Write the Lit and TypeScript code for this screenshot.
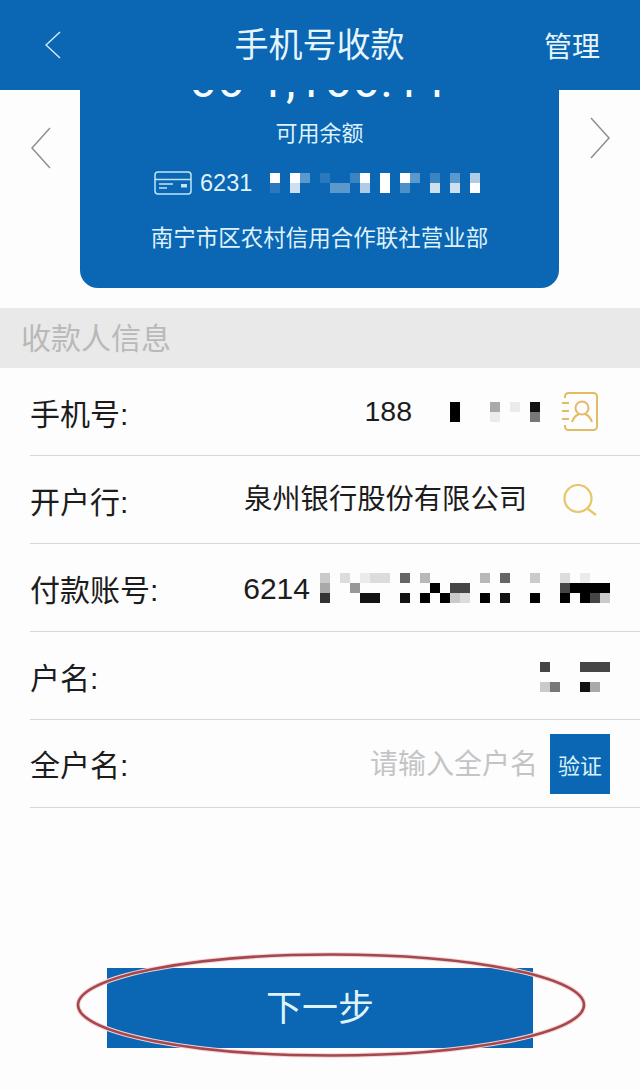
import { LitElement, html, css } from "lit";
import { customElement, property } from "lit/decorators.js";

@customElement("pixel-mosaic")
class PixelMosaic extends LitElement {
  @property({ type: Array }) rows: string[] = [];
  @property() tint = "0,0,0";
  static styles = css`
    :host { display: block; }
    .row { display: flex; }
    .cell { width: 10px; height: 10px; flex: none; }
  `;
  render() {
    return this.rows.map(
      (r) => html`<div class="row">${[...r].map((c) => {
        const a = c === "." ? 0 : parseInt(c, 16) / 15;
        return html`<div class="cell" style="background:rgba(${this.tint},${a.toFixed(2)})"></div>`;
      })}</div>`
    );
  }
}

const chevron = (pts: string, w: number, h: number, cls: string) => html`
  <svg class=${cls} width=${w} height=${h} viewBox="0 0 ${w} ${h}" fill="none">
    <polyline points=${pts} stroke="currentColor" stroke-width="1.5" />
  </svg>`;

@customElement("app-root")
class AppRoot extends LitElement {
  static styles = css`
    :host {
      display: block;
      width: 640px;
      height: 1090px;
      overflow: hidden;
      background: #fdfdfd;
      font-family: "Liberation Sans", "Noto Sans CJK SC", sans-serif;
      color: #1c1c1c;
    }
    .bar {
      height: 90px;
      background: #0b66b3;
      color: #e6f5fb;
      display: grid;
      grid-template-columns: 1fr auto 1fr;
      align-items: center;
      padding: 0 40px 0 45px;
    }
    .back { margin-top: -1px; color: #d5e8f3; }
    .title { font-size: 34px; line-height: 90px; margin-left: -6px; }
    .manage { font-size: 28px; justify-self: end; margin-top: -1px; }

    .carousel {
      display: grid;
      grid-template-columns: 80px 479px 81px;
      height: 198px;
    }
    .prev { margin: 37px 0 0 30px; color: #8f8f8f; display: block; }
    .next { margin: 27px 0 0 31px; color: #8f8f8f; display: block; }
    .card {
      background: #0b66b3;
      border-radius: 0 0 18px 18px;
      color: #dff2fa;
      display: flex;
      flex-direction: column;
      align-items: center;
    }
    .amount {
      height: 16px;
      overflow: hidden;
      color: #f6fbfd;
      font-family: Roboto, sans-serif;
      font-size: 48px;
      line-height: 48px;
      letter-spacing: 1px;
      white-space: pre;
    }
    .amount span { display: block; margin-top: -33px; }
    .avail { font-size: 22px; line-height: 30px; margin-top: 13px; }
    .acct {
      display: flex;
      align-items: center;
      margin-top: 19px;
      height: 30px;
      align-self: flex-start;
      padding-left: 74px;
    }
    .acct svg { color: #bfe6f7; display: block; }
    .acct .num { font-size: 23.5px; margin-left: 8px; width: 60px; }
    .org { font-size: 22.5px; line-height: 32px; margin-top: 25px; white-space: nowrap; }

    .section {
      margin-top: 20px;
      height: 60px;
      background: #e9e9e9;
      color: #b9b9b9;
      font-size: 30px;
      line-height: 62px;
      padding-left: 21px;
    }
    .row {
      height: 87px;
      margin-left: 30px;
      border-bottom: 1px solid #d8d8dc;
      display: flex;
      align-items: center;
      padding-right: 30px;
    }
    .label { font-size: 30px; width: 132px; flex: none; white-space: nowrap; }
    .r5 .label { padding-bottom: 2px; }
    .value { margin-left: auto; display: flex; align-items: center; white-space: nowrap; font-size: 28.3px; }
    .icon { display: block; flex: none; }
    .r1 { padding-right: 42px; }
    .r1 .digits { font-size: 28.5px; }
    .r1 .m { margin-left: 8px; }
    .r1 .icon { margin-left: 22px; }
    .r2 { padding-right: 43px; }
    .r2 .value { padding-bottom: 7px; }
    .r2 .icon { margin-left: 36px; }
    .r3 .digits { font-size: 30px; padding-top: 2px; }
    .r3 .m { margin-left: 10px; }
    .r4 .value { padding-top: 2px; }
    .ph { color: #c4c4c6; font-size: 28px; padding-bottom: 3px; }
    .verify {
      width: 60px;
      height: 60px;
      margin-left: 12px;
      background: #0b66b3;
      color: #d9f3fa;
      font-size: 22px;
      display: flex;
      align-items: center;
      justify-content: center;
    }
    .action {
      position: relative;
      margin-top: 160px;
      display: flex;
      justify-content: center;
    }
    .next-btn {
      width: 426px;
      height: 80px;
      background: #0b66b3;
      color: #dff4fa;
      font-size: 36px;
      line-height: 82px;
      text-align: center;
    }
    .ring { position: absolute; left: 74px; top: -18px; pointer-events: none; }
  `;

  render() {
    return html`
      <div class="bar">
        ${chevron("15,1 1,14 15,27", 16, 28, "back")}
        <div class="title">手机号收款</div>
        <div class="manage">管理</div>
      </div>
      <div class="carousel">
        <div>${chevron("20,1 2,21 20,41", 21, 42, "prev")}</div>
        <div class="card">
          <div class="amount"><span>66 1,166.11</span></div>
          <div class="avail">可用余额</div>
          <div class="acct">
            <svg width="38" height="24" viewBox="0 0 38 24" fill="none" stroke="currentColor" stroke-width="1.5">
              <rect x="1" y="1" width="36" height="22" rx="3" />
              <path d="M1 8.500H37M5 13H19M5 17H13" />
              <rect x="27" y="13" width="6" height="3.500" fill="currentColor" stroke="none" />
            </svg>
            <span class="num">6231</span>
            <pixel-mosaic
              tint="255,255,255"
              .rows=${[".f.f5.2..3f.f.f5.3.5.a", ".2.c...55.a.f.4..c.c.f"]}
            ></pixel-mosaic>
          </div>
          <div class="org">南宁市区农村信用合作联社营业部</div>
        </div>
        <div>${chevron("1,1 19,21 1,41", 20, 42, "next")}</div>
      </div>

      <div class="section">收款人信息</div>

      <div class="row r1">
        <span class="label">手机号:</span>
        <div class="value">
          <span class="digits">188</span>
          <pixel-mosaic class="m" .rows=${["...f...5.1.e", "...f...1...8"]}></pixel-mosaic>
        </div>
        <svg class="icon" width="36" height="39" viewBox="0 0 36 39" fill="none" stroke="#e2bb63" stroke-width="2">
          <path d="M3 6V4.500A3.500 3.500 0 0 1 6.500 1H31.500A3.500 3.500 0 0 1 35 4.500V34.500A3.500 3.500 0 0 1 31.500 38H6.500A3.500 3.500 0 0 1 3 34.500V33" />
          <path d="M0 11H7M0 19H7M0 27H7" />
          <circle cx="20" cy="16" r="6.500" />
          <path d="M10 30C11.500 25.500 14.500 23 17 22M30 30C28.500 25.500 25.500 23 23 22" />
        </svg>
      </div>
      <div class="row r2">
        <span class="label">开户行:</span>
        <div class="value">泉州银行股份有限公司</div>
        <svg class="icon" width="34" height="32" viewBox="0 0 34 32" fill="none" stroke="#e6c667" stroke-width="2.200">
          <circle cx="15" cy="14.500" r="13.500" />
          <path d="M25 25L33 31" />
        </svg>
      </div>
      <div class="row r3">
        <span class="label">付款账号:</span>
        <div class="value">
          <span class="digits">6214</span>
          <pixel-mosaic
            class="m"
            .rows=${["3.2.122.9.4.....4.9..3..2.1..", "5..6.......f.bb.........bffff", "c...ee..e.f.f32.f.e..f..f.fb3"]}
          ></pixel-mosaic>
        </div>
      </div>
      <div class="row r4">
        <span class="label">户名:</span>
        <div class="value">
          <pixel-mosaic .rows=${["b...bbb", ".......", "38..e5."]}></pixel-mosaic>
        </div>
      </div>
      <div class="row r5">
        <span class="label">全户名:</span>
        <div class="value">
          <span class="ph">请输入全户名</span>
          <div class="verify">验证</div>
        </div>
      </div>

      <div class="action">
        <div class="next-btn">下一步</div>
        <svg class="ring" width="514" height="110" viewBox="0 0 514 110" fill="none">
          <ellipse cx="257" cy="55" rx="253" ry="50.500" stroke="#f5d3d3" stroke-width="4.500" />
          <ellipse cx="257" cy="55" rx="253" ry="50.500" stroke="#a4474f" stroke-width="2.600" />
        </svg>
      </div>
    `;
  }
}
